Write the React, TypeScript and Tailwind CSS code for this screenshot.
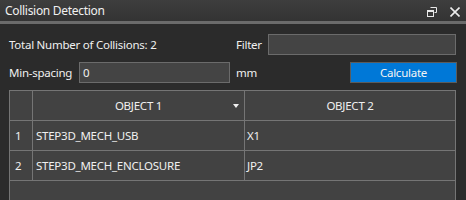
import React from "react";

const rows = [
  { id: 1, a: "STEP3D_MECH_USB", b: "X1" },
  { id: 2, a: "STEP3D_MECH_ENCLOSURE", b: "JP2" },
];

function RestoreIcon() {
  return (
    <svg width="10" height="10" viewBox="0 0 10 10" className="block">
      <path d="M3.5 0.5h6v5h-2" fill="none" stroke="#e8e8e8" strokeWidth="1" />
      <rect x="0.5" y="3.5" width="6" height="6" fill="none" stroke="#e8e8e8" strokeWidth="1" />
      <rect x="0.5" y="3.5" width="6" height="1.5" fill="#e8e8e8" />
    </svg>
  );
}

function CloseIcon() {
  return (
    <svg width="10" height="10" viewBox="0 0 10 10" className="block">
      <path d="M0.5 0.5L9.5 9.5M9.5 0.5L0.5 9.5" stroke="#ececec" strokeWidth="1.6" />
    </svg>
  );
}

export default function App() {
  return (
    <div
      className="w-[466px] h-[200px] overflow-hidden flex flex-col bg-[#2b2b2b] text-[#f0f0f0] text-[11.5px] tracking-[-0.25px]"
      style={{ fontFamily: '"Noto Sans", "Open Sans", sans-serif' }}
    >
      <div className="h-[21px] flex items-center justify-between pl-[5px] pr-[6px] bg-gradient-to-b from-[#3e3e3e] to-[#333333]">
        <span className="text-[12px] leading-none tracking-[-0.3px]">Collision Detection</span>
        <div className="flex items-center gap-[13px] pt-[2px]">
          <RestoreIcon />
          <CloseIcon />
        </div>
      </div>
      <div className="h-[3px] bg-[#6b6b6b]" />

      <div className="flex flex-col flex-1 pl-[9px] pt-[10px]">
        <div className="h-[21px] flex items-center">
          <span className="w-[227px] leading-none">Total Number of Collisions: 2</span>
          <span className="w-[32px] leading-none">Filter</span>
          <div className="w-[188px] h-[21px] bg-[#444444] border border-[#6b6b6b]" />
        </div>

        <div className="h-[21px] flex items-center mt-[7px]">
          <span className="w-[70px] leading-none">Min-spacing</span>
          <div className="w-[151px] h-[21px] bg-[#444444] border border-[#6b6b6b] flex items-center pl-[3px] leading-none">
            0
          </div>
          <span className="w-[120px] pl-[6px] leading-none">mm</span>
          <button className="w-[107px] h-[21px] bg-[#0078d7] border border-[#5c5c5c] text-[#f4f4f4] leading-none">
            Calculate
          </button>
        </div>

        <div className="mt-[7px] w-[447px] flex-1 flex flex-col border-l border-t border-r border-[#757575] bg-[#424242]">
          <div className="flex h-[30px] border-b border-[#757575]">
            <div className="w-[23px] border-r border-[#757575]" />
            <div className="w-[212px] border-r border-[#757575] relative flex items-center justify-center">
              OBJECT 1
              <svg width="6" height="4" viewBox="0 0 6 4" className="absolute right-[5px] top-[13px]">
                <path d="M0 0h6L3 4z" fill="#f0f0f0" />
              </svg>
            </div>
            <div className="flex-1 flex items-center justify-center">OBJECT 2</div>
          </div>
          {rows.map((r) => (
            <div key={r.id} className="flex h-[30px] border-b border-[#757575]">
              <div className="w-[23px] border-r border-[#757575] flex items-center pl-[5px]">{r.id}</div>
              <div className="w-[212px] border-r border-[#757575] flex items-center pl-[3px]">{r.a}</div>
              <div className="flex-1 flex items-center pl-[2px]">{r.b}</div>
            </div>
          ))}
        </div>
      </div>
    </div>
  );
}
